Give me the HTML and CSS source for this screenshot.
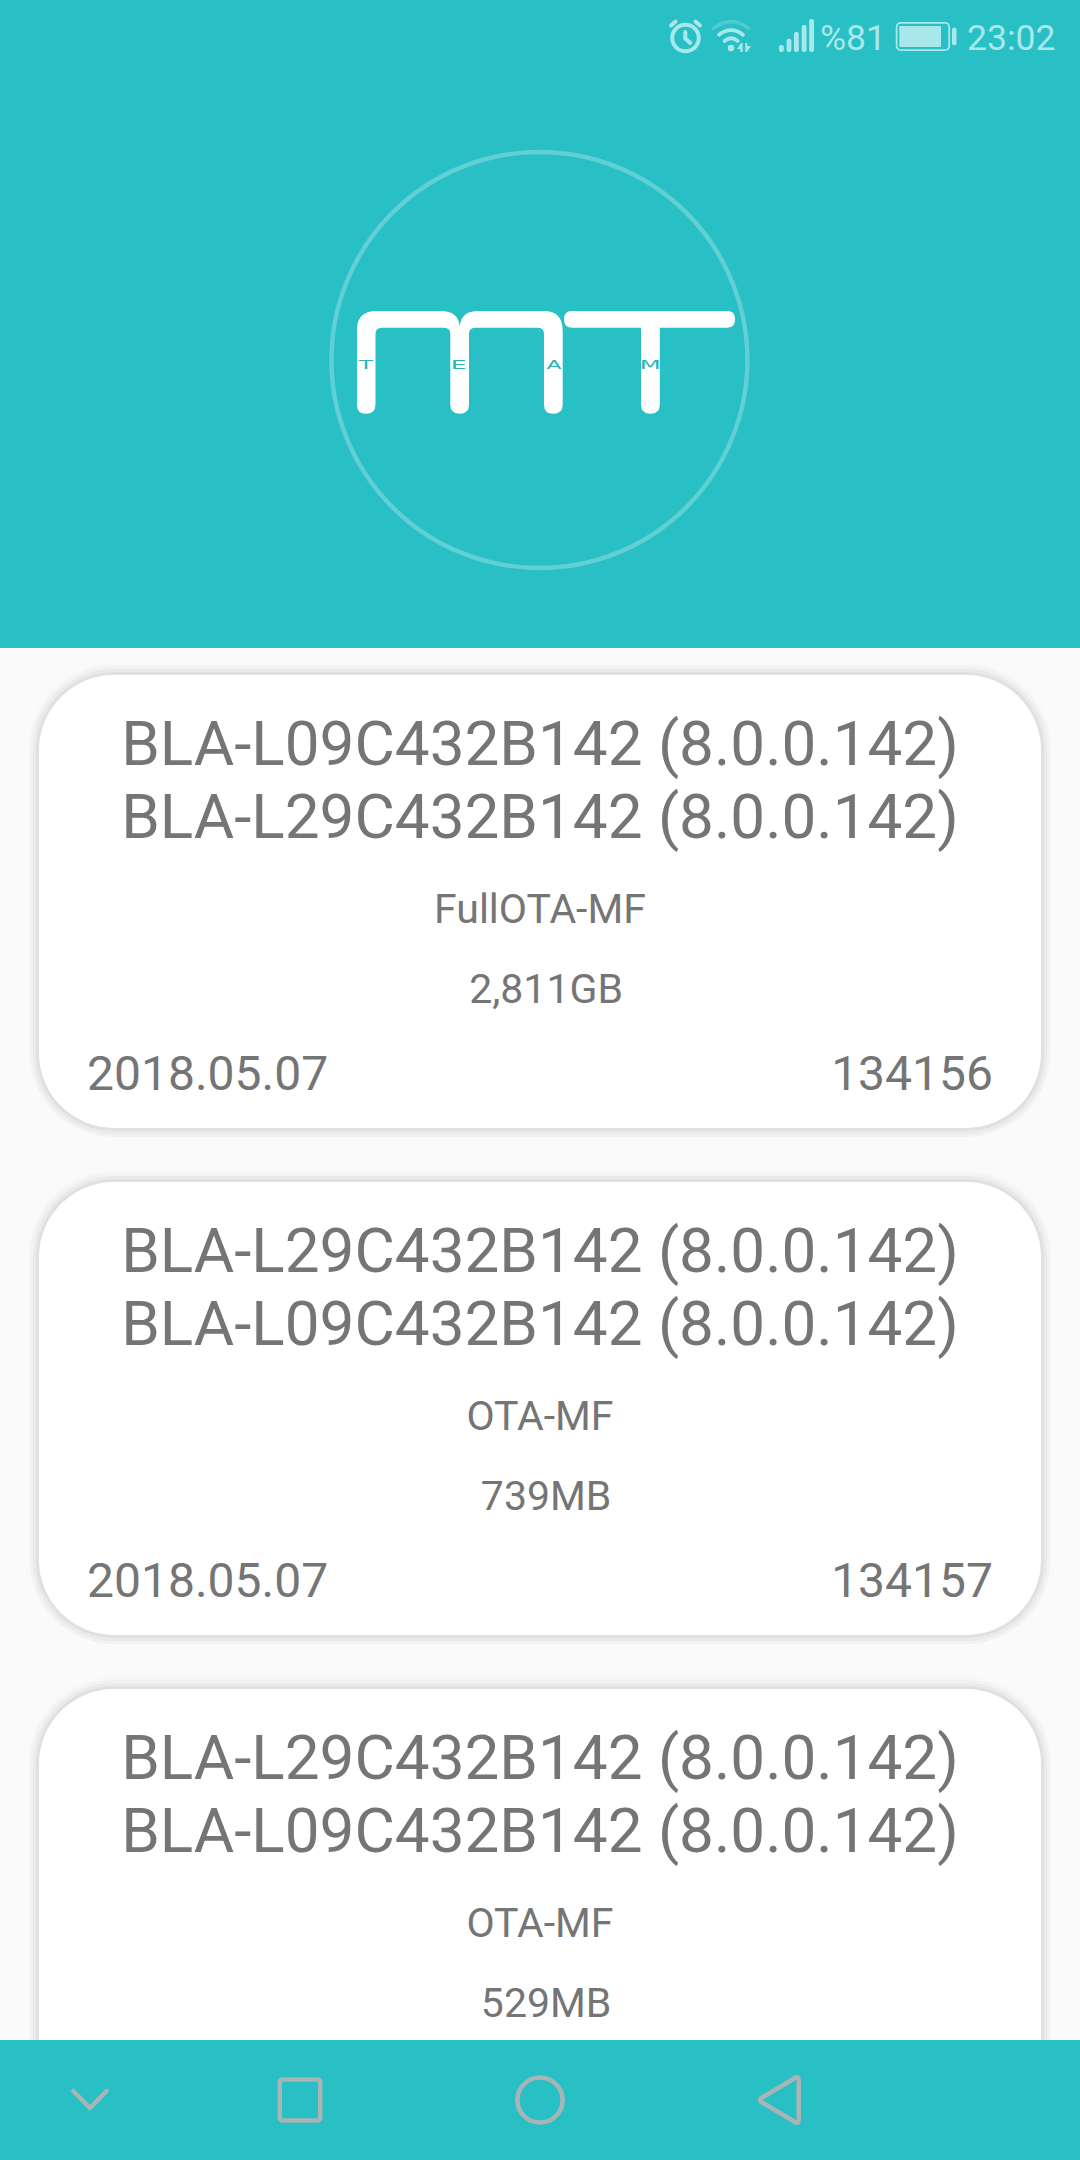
FILE: index.html
```html
<!DOCTYPE html>
<html lang="en">
<head>
<meta charset="utf-8">
<title>Firmware list</title>
<link rel="stylesheet" href="styles.css">
</head>
<body>
<div class="screen">
  <header class="hero">
    <div class="status">
      <svg class="alarm" width="36" height="36" viewBox="668 18 36 36" fill="none" stroke="currentColor" stroke-width="4" stroke-linecap="round" stroke-linejoin="round">
        <circle cx="685.5" cy="38" r="13.3"/>
        <path d="M671 25.500l4.500-4M695.500 21.500l4.500 4"/>
        <path d="M685.300 32v6.500l5 4.500"/>
      </svg>
      <svg class="wifi" width="42" height="36" viewBox="711 18 42 36" fill="none" stroke="currentColor" stroke-width="3.800" stroke-linecap="round">
        <path class="dim" d="M713.700 28.300Q731 15 748.700 28.300"/>
        <path d="M719 34.700Q731 25.500 743 34.700"/>
        <path d="M724.600 41Q731 35.500 737.700 41"/>
        <circle cx="731" cy="48" r="3.300" fill="currentColor" stroke="none"/>
        <path fill="currentColor" stroke="none" d="M741 43h1.700v9h-2.400v-3H737zM745.300 43h2v3h3.700l-4.200 6h-1.500z"/>
      </svg>
      <svg class="signal" width="36" height="36" viewBox="779 18 36 36" fill="currentColor">
        <rect x="779" y="45" width="4.800" height="7" rx="2"/>
        <rect x="786.600" y="38.700" width="4.800" height="13.300" rx="2"/>
        <rect x="794" y="32" width="4.800" height="20" rx="2"/>
        <rect x="801.700" y="25" width="4.800" height="27" rx="2"/>
        <rect x="809.200" y="19" width="4.800" height="33" rx="2"/>
      </svg>
      <span class="percent">%81</span>
      <svg class="battery" width="62" height="36" viewBox="895 18 62 36" fill="currentColor">
        <rect x="896.600" y="22.900" width="52.600" height="27.200" rx="4" fill="none" stroke="currentColor" stroke-width="1.800"/>
        <rect x="899.300" y="26" width="41.700" height="21" rx="1"/>
        <rect x="952" y="27.500" width="4.500" height="17.700" rx="2"/>
      </svg>
      <span class="clock">23:02</span>
    </div>
    <svg class="logo" width="424" height="424" viewBox="328 148 424 424">
      <circle class="ring" cx="539.400" cy="360" r="208"/>
      <g fill="#fff">
        <path d="M357 404V330Q357 311 376 311H441Q458 311 459.700 326Q461.500 311 478 311H544Q562.700 311 562.700 331V404.500Q562.700 413.800 553.300 413.800T544 404.500V334Q544 327.700 538 327.700H475Q469 327.700 469 334V404.500Q469 413.800 459.700 413.800T450.300 404.500V334Q450.300 327.700 444 327.700H382Q375.500 327.700 375.500 334V404.500Q375.500 413.800 366.200 413.800T357 404.500Z"/>
        <path d="M572 311H727.500Q735 311 735 319.300T727.500 327.700H659.800V404.500Q659.800 413.800 650.400 413.800T641 404.500V327.700H572Q564 327.700 564 319.300T572 311Z"/>
      </g>
      <g class="team">
        <text x="359" y="368.700" textLength="14" lengthAdjust="spacingAndGlyphs">T</text>
        <text x="450.800" y="368.700" textLength="16" lengthAdjust="spacingAndGlyphs">E</text>
        <text x="546.500" y="368.700" textLength="15" lengthAdjust="spacingAndGlyphs">A</text>
        <text x="639.800" y="368.700" textLength="21" lengthAdjust="spacingAndGlyphs">M</text>
      </g>
    </svg>
  </header>

  <main class="list">
    <article class="card">
      <h2 class="title">BLA-L09C432B142 (8.0.0.142)<br>BLA-L29C432B142 (8.0.0.142)</h2>
      <p class="type">FullOTA-MF</p>
      <p class="size">&nbsp;2,811GB</p>
      <div class="meta"><span>2018.05.07</span><span>134156</span></div>
    </article>
    <article class="card">
      <h2 class="title">BLA-L29C432B142 (8.0.0.142)<br>BLA-L09C432B142 (8.0.0.142)</h2>
      <p class="type">OTA-MF</p>
      <p class="size">&nbsp;739MB</p>
      <div class="meta"><span>2018.05.07</span><span>134157</span></div>
    </article>
    <article class="card">
      <h2 class="title">BLA-L29C432B142 (8.0.0.142)<br>BLA-L09C432B142 (8.0.0.142)</h2>
      <p class="type">OTA-MF</p>
      <p class="size">&nbsp;529MB</p>
    </article>
  </main>

  <nav class="navbar">
    <span class="slot narrow"><svg width="60" height="60" viewBox="0 0 60 60"><path d="M13.300 21L30 38L46.500 21"/></svg></span>
    <span class="slot"><svg width="60" height="60" viewBox="0 0 60 60"><rect x="9.800" y="9.600" width="40.400" height="40.800" rx="2.500"/></svg></span>
    <span class="slot"><svg width="60" height="60" viewBox="0 0 60 60"><circle cx="30" cy="30" r="22.600"/></svg></span>
    <span class="slot"><svg width="60" height="60" viewBox="0 0 60 60"><path d="M45.300 7.800Q48.700 6.300 48.700 9.500V50.500Q48.700 53.700 45.300 52.200L11 31.800Q9.300 30 11 28.200Z"/></svg></span>
  </nav>
</div>
</body>
</html>
```
FILE: styles.css
```css
* {
  box-sizing: border-box;
}

body {
  margin: 0;
  font-family: Roboto, "Liberation Sans", sans-serif;
  color: #757575;
}

.screen {
  display: flex;
  flex-direction: column;
  width: 1080px;
  height: 2160px;
  overflow: hidden;
  background: #fafafa;
}

.hero {
  display: flex;
  flex: none;
  flex-direction: column;
  align-items: center;
  height: 648px;
  background: #28bfc5;
}

.status {
  display: flex;
  align-items: center;
  align-self: stretch;
  justify-content: flex-end;
  height: 72px;
  padding-right: 24px;
  font-size: 35.6px;
  line-height: 42px;
  color: #a9e8ea;
}

.status svg {
  display: block;
}

.alarm {
  margin-right: 7px;
}

.wifi {
  margin-right: 26px;
}

.wifi .dim {
  opacity: 0.3;
}

.signal {
  margin-right: 5px;
}

.percent {
  width: 64px;
  margin-right: 11px;
}

.percent,
.clock {
  padding-top: 3px;
}

.clock {
  width: 89px;
  margin-left: 10px;
}

.logo {
  display: block;
  margin-top: 76px;
}

.ring {
  fill: none;
  stroke: #61d0d4;
  stroke-width: 4.4;
}

.team {
  font-family: "DejaVu Sans", sans-serif;
  font-size: 12px;
  fill: #28b3b9;
}

.list {
  display: flex;
  flex: 1;
  flex-direction: column;
  gap: 54px;
  min-height: 0;
  padding: 27px 39px 0;
  overflow: hidden;
}

.card {
  flex: none;
  height: 453px;
  padding: 32px 48px 0;
  border-radius: 75px;
  background: #fff;
  box-shadow:
    0 0 0 3px #e0e0e0,
    0 0 0 6px #eaeaea,
    0 0 0 9px #f2f2f2,
    0 -2px 0 10px #f7f7f7;
  text-align: center;
}

.title {
  margin: 0;
  font-size: 62px;
  font-weight: 400;
  line-height: 73px;
  white-space: nowrap;
}

.type,
.size {
  margin: 32px 0 0;
  font-size: 41px;
  line-height: 49px;
}

.size {
  margin-top: 31px;
  padding-left: 2px;
}

.meta {
  display: flex;
  justify-content: space-between;
  margin-top: 32px;
  font-size: 48px;
  line-height: 56px;
}

.navbar {
  display: flex;
  flex: none;
  height: 120px;
  background: #28bfc5;
}

.slot {
  display: flex;
  align-items: center;
  justify-content: center;
  width: 240px;
}

.slot.narrow {
  width: 180px;
}

.slot svg {
  fill: none;
  stroke: #a9b5b5;
  stroke-width: 4.5;
  stroke-linecap: round;
  stroke-linejoin: round;
}
```
